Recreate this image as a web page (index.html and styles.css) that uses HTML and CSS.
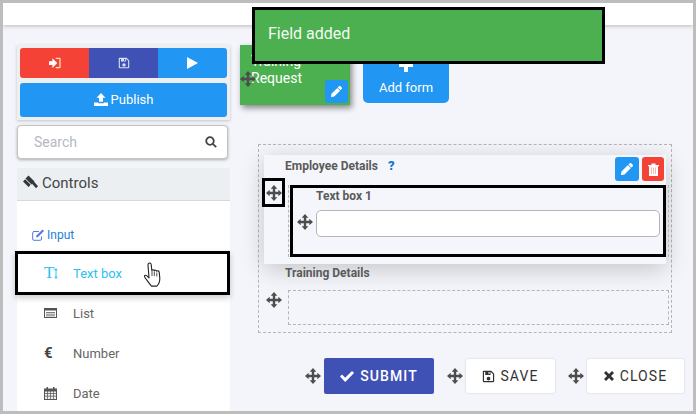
FILE: index.html
```html
<!DOCTYPE html>
<html lang="en">
<head>
    <meta charset="UTF-8">
    <title>Form builder</title>
    <link rel="stylesheet" href="styles.css">
</head>
<body>
    <svg class="defs" width="0" height="0">
        <symbol id="i-move" viewBox="0 0 24 24"><path d="M12 0l5 5.500h-3.200v4.700h4.700V7l5.500 5-5.500 5v-3.200h-4.700v4.700H17l-5 5.500-5-5.500h3.200v-4.700H5.500V17L0 12l5.500-5v3.200h4.700V5.500H7z"/></symbol>
        <symbol id="i-pencil" viewBox="0 0 512 512"><path d="M497.900 142.100l-46.100 46.100c-4.700 4.700-12.300 4.700-17 0l-111-111c-4.700-4.700-4.700-12.300 0-17l46.100-46.100c18.700-18.700 49.100-18.700 67.900 0l60.100 60.100c18.800 18.700 18.800 49.100 0 67.900zM284.200 99.800L21.600 362.400.4 483.900c-2.900 16.400 11.400 30.600 27.800 27.800l121.500-21.300 262.600-262.600c4.700-4.700 4.700-12.300 0-17l-111-111c-4.800-4.700-12.400-4.700-17.100 0z"/></symbol>
        <symbol id="i-save" viewBox="0 0 16 16"><path fill-rule="evenodd" d="M1.500 1H11.500L15 4.500V13.500A1.500 1.500 0 0 1 13.500 15H2.500A1.500 1.500 0 0 1 1 13.500V1.500A.5.5 0 0 1 1.500 1zM2.500 2.500V13.500H13.500V5.100L10.900 2.500H10.500V6H4V2.500zM8 2.500V5H9.300V2.500zM8 8.200A2.300 2.300 0 1 1 8 12.800 2.300 2.300 0 0 1 8 8.200z"/></symbol>
    </svg>

    <div class="frame">
        <div class="topbar"></div>

        <div class="content">
            <aside class="sidebar">
                <div class="actions">
                    <div class="action-row">
                        <button class="btn-red">
                            <svg class="ico" width="12" height="12" viewBox="0 0 16 16" fill="#fff"><path d="M0 5.500h4.500V1.500L11 8l-6.500 6.500v-4H0z"/><path d="M9 1h5a1.500 1.500 0 0 1 1.500 1.500v11A1.500 1.500 0 0 1 14 15H9v-1.600h4.800V2.600H9z" fill="#ffe2b0"/></svg>
                        </button>
                        <button class="btn-indigo">
                            <svg class="ico ico-pale" width="12" height="12"><use href="#i-save"/></svg>
                        </button>
                        <button class="btn-blue">
                            <svg class="ico" width="11" height="12" viewBox="0 0 11 12" fill="#fff"><path d="M0 0l11 6-11 6z"/></svg>
                        </button>
                    </div>
                    <button class="publish">
                        <svg class="ico" width="14" height="13" viewBox="0 0 14 13" fill="#fff"><path d="M7 0l4.500 4.800H9v4H5v-4H2.500z"/><path d="M0 9.500h4.200v.8h5.600v-.8H14V13H0z"/></svg>
                        Publish
                    </button>
                </div>

                <div class="search">
                    <span>Search</span>
                    <svg width="12" height="12" viewBox="0 0 12 12" fill="none" stroke="#444" stroke-width="1.800"><circle cx="5" cy="5" r="3.800"/><path d="M7.800 7.800l3.400 3.400"/></svg>
                </div>

                <div class="controls-head">
                    <svg width="15" height="15" viewBox="0 0 15 15" fill="#33383d"><path d="M5.500 .5l6 6-3 3-6-6z"/><path d="M8 7.500l2-2 5 5.800-2 2z"/><path d="M0 6.500l2.200-2.200 5.500 5.500L5.500 12z"/></svg>
                    Controls
                </div>

                <div class="controls-body">
                    <div class="group-title">
                        <svg width="13" height="12" viewBox="0 0 13 12" fill="none" stroke="#4f7be0" stroke-width="1"><path d="M9.500 7.500V10a1.300 1.300 0 0 1-1.300 1.300H2A1.300 1.300 0 0 1 .7 10V3.800A1.300 1.300 0 0 1 2 2.500h5"/><path d="M4.500 6.500l-.5 2 2-.5 6-6-1.500-1.500z" fill="#4f7be0" stroke="none"/></svg>
                        Input
                    </div>
                    <div class="control control-active">
                        <span class="control-ico text-ico">T<svg width="4" height="11" viewBox="0 0 4 12" fill="#2cc0ee"><path d="M2 0l2 2.500H2.500v7H4L2 12 0 9.500h1.500v-7H0z"/></svg></span>
                        Text box
                    </div>
                    <div class="control">
                        <span class="control-ico">
                            <svg width="13" height="10" viewBox="0 0 13 10"><path d="M0 0h13v10H0z" fill="#555"/><path d="M1 2.500h11V9H1z" fill="#fff"/><path d="M2 4h9v.8H2zM2 5.800h9v.8H2zM2 7.400h9v.8H2z" fill="#555"/></svg>
                        </span>
                        List
                    </div>
                    <div class="control">
                        <span class="control-ico euro">€</span>
                        Number
                    </div>
                    <div class="control">
                        <span class="control-ico">
                            <svg width="13" height="13" viewBox="0 0 13 13"><path d="M0 1.500h2.500V0h1.500v1.500h5V0h1.500v1.500H13V13H0z" fill="#555"/><path d="M1 4.500h2.300v1.800H1zM4 4.500h2.200v1.800H4zM6.900 4.500h2.200v1.800H6.900zM9.800 4.500H12v1.800H9.800zM1 7h2.300v1.800H1zM4 7h2.200v1.800H4zM6.900 7h2.200v1.800H6.900zM9.800 7H12v1.800H9.800zM1 9.500h2.300V12H1zM4 9.500h2.200V12H4zM6.900 9.500h2.200V12H6.900zM9.800 9.500H12V12H9.800z" fill="#eee"/></svg>
                        </span>
                        Date
                    </div>
                </div>
            </aside>

            <main class="main">
                <div class="tiles">
                    <div class="form-tile">
                        <div class="form-name">Training Request</div>
                        <span class="mini-btn tile-edit"><svg width="11" height="11" fill="#fff"><use href="#i-pencil"/></svg></span>
                        <svg class="tile-move" width="16" height="16" fill="#4d4d4d"><use href="#i-move"/></svg>
                    </div>
                    <div class="add-form">
                        <svg width="14" height="14" viewBox="0 0 14 14" fill="#fff"><path d="M5 0h4v5h5v4H9v5H5V9H0V5h5z"/></svg>
                        <span>Add form</span>
                    </div>
                </div>

                <div class="canvas">
                    <section class="section section-open">
                        <div class="section-head">
                            <span class="section-title">Employee Details</span>
                            <span class="help">?</span>
                            <span class="section-tools">
                                <span class="mini-btn"><svg width="12" height="12" fill="#fff"><use href="#i-pencil"/></svg></span>
                                <span class="mini-btn mini-red">
                                    <svg width="11" height="13" viewBox="0 0 11 13"><path d="M0 2h3.500V.5h4V2H11v1.200H10V13H1V3.200H0z" fill="#fff"/><path d="M3 4.500h.8V11H3zM5.100 4.500h.8V11h-.8zM7.200 4.500H8V11h-.8z" fill="#f8a9a3"/></svg>
                                </span>
                            </span>
                        </div>
                        <div class="section-body">
                            <span class="handle-box"><svg width="16" height="16" fill="#4d4d4d"><use href="#i-move"/></svg></span>
                            <div class="field-slot">
                                <div class="field-box">
                                    <svg class="field-move" width="16" height="16" fill="#4d4d4d"><use href="#i-move"/></svg>
                                    <div class="field">
                                        <label>Text box 1</label>
                                        <div class="text-input"></div>
                                    </div>
                                </div>
                            </div>
                        </div>
                    </section>

                    <section class="section-empty">
                        <div class="section-title empty-title">Training Details</div>
                        <div class="empty-row">
                            <svg class="empty-move" width="16" height="16" fill="#4d4d4d"><use href="#i-move"/></svg>
                            <div class="dropzone"></div>
                        </div>
                    </section>
                </div>

                <div class="form-actions">
                    <svg width="16" height="16" fill="#4d4d4d"><use href="#i-move"/></svg>
                    <button class="submit">
                        <svg width="14" height="11" viewBox="0 0 14 11" fill="#fff"><path d="M0 5.500l2-2 3.200 3.200L12 0l2 2-8.800 9z"/></svg>
                        SUBMIT
                    </button>
                    <svg class="gap-move" width="16" height="16" fill="#4d4d4d"><use href="#i-move"/></svg>
                    <button class="plain save">
                        <svg width="13" height="13" fill="#333"><use href="#i-save"/></svg>
                        SAVE
                    </button>
                    <svg class="gap-move" width="16" height="16" fill="#4d4d4d"><use href="#i-move"/></svg>
                    <button class="plain close">
                        <svg width="10" height="10" viewBox="0 0 10 10" fill="#333"><path d="M0 2l2-2 3 3 3-3 2 2-3 3 3 3-2 2-3-3-3 3-2-2 3-3z"/></svg>
                        CLOSE
                    </button>
                </div>
            </main>
        </div>

        <div class="toast">Field added</div>

        <svg class="cursor" width="20" height="26" viewBox="0 0 20 26">
            <path d="M5.500 1.500c1-1 2.500-.5 2.700 1l.6 6c.3-1 2.300-1 2.500.3.400-1 2.200-.8 2.400.5.500-.8 2.300-.6 2.500.8l.6 6c.2 3-1 6-3 8H8.500c-1.500-1.500-3-4-5-6.500-1-1.200-2.500-2.800-2-3.800.6-1 2-.4 3 .5l1.500 1.500L5 3c0-.7 0-1.100.5-1.500z" fill="#fff" stroke="#222" stroke-width="1.100" stroke-linejoin="round"/>
            <path d="M9 9v5M11.300 9.500v4.500M13.800 10.500v4" stroke="#222" stroke-width=".8" fill="none"/>
        </svg>
    </div>
</body>
</html>
```

FILE: styles.css
```css
* {
    box-sizing: border-box;
}

body {
    margin: 0;
    font-family: "Roboto", "Liberation Sans", sans-serif;
    color: #555;
}

button {
    font-family: inherit;
    border: none;
    padding: 0;
}

.defs {
    position: absolute;
}

.frame {
    position: relative;
    width: 696px;
    height: 414px;
    border: 3px solid #bdbdbd;
    background: #f4f5fa;
    overflow: hidden;
}

.topbar {
    height: 22px;
    background: #fff;
    box-shadow: 0 1px 4px rgba(0, 0, 0, 0.25);
}

.content {
    display: flex;
    padding: 20px 0 0 14px;
}

/* sidebar */
.sidebar {
    width: 213px;
    flex: none;
}

.actions {
    padding: 3px;
    background: #eeeff1;
    box-shadow: 0 1px 3px rgba(0, 0, 0, 0.2);
}

.action-row {
    display: flex;
    height: 30px;
    border-radius: 3px;
    overflow: hidden;
}

.action-row button {
    flex: 1;
    display: flex;
    align-items: center;
    justify-content: center;
}

.btn-red {
    background: #f44336;
}

.btn-indigo {
    background: #3f51b5;
}

.btn-blue {
    background: #2196f3;
}

.ico-pale {
    fill: #d9def5;
}

.publish {
    display: flex;
    align-items: center;
    justify-content: center;
    gap: 3px;
    width: 100%;
    height: 34px;
    margin-top: 5px;
    padding-bottom: 1px;
    background: #2196f3;
    color: #fff;
    font-size: 13px;
    border-radius: 3px;
}

.search {
    display: flex;
    align-items: center;
    justify-content: space-between;
    width: 211px;
    height: 34px;
    margin: 5px 0 9px;
    padding: 0 10px 0 16px;
    background: #fff;
    border: 1px solid #c4c4c4;
    border-radius: 4px;
    box-shadow: 0 1px 3px rgba(0, 0, 0, 0.3);
    color: #b4b8c4;
    font-size: 14px;
}

.controls-head {
    display: flex;
    align-items: center;
    gap: 4px;
    height: 33px;
    padding: 0 0 3px 6px;
    background: #eceff1;
    border-bottom: 1px solid #cfdde3;
    color: #444;
    font-size: 15px;
}

.controls-body {
    background: #fff;
    padding-top: 25px;
    height: 220px;
}

.group-title {
    display: flex;
    align-items: center;
    gap: 2px;
    height: 18px;
    padding-left: 15px;
    color: #1e7fd8;
    font-size: 12px;
}

.control {
    display: flex;
    align-items: center;
    height: 40px;
    padding-left: 27px;
    font-size: 13px;
    color: #666;
}

.control-ico {
    display: flex;
    align-items: center;
    width: 29px;
    color: #555;
}

.control-active {
    height: 44px;
    margin: 7px 0 -2px -2px;
    padding-left: 26px;
    border: 3px solid #000;
    color: #2cc0ee;
    box-shadow: 0 3px 6px rgba(0, 0, 0, 0.2);
}

.text-ico {
    font-family: "Liberation Serif", serif;
    font-size: 17px;
    color: #2cc0ee;
}

.euro {
    font-weight: 700;
    font-size: 15px;
    color: #444;
}

/* main area */
.main {
    flex: none;
    width: 450px;
    margin-left: 10px;
}

.tiles {
    display: flex;
    align-items: flex-start;
    gap: 13px;
}

.form-tile {
    position: relative;
    width: 110px;
    height: 60px;
    padding: 8px 8px 0 11px;
    background: #4caf50;
    color: #fff;
    font-size: 14px;
    line-height: 17px;
    box-shadow: 2px 3px 6px rgba(0, 0, 0, 0.45);
}

.form-name {
    width: 70px;
}

.mini-btn {
    display: flex;
    align-items: center;
    justify-content: center;
    width: 24px;
    height: 24px;
    background: #2196f3;
    border-radius: 3px;
}

.mini-red {
    width: 22px;
    background: #f44336;
}

.tile-edit {
    position: absolute;
    right: 2px;
    bottom: 2px;
    width: 23px;
    height: 23px;
}

.tile-move {
    position: absolute;
    left: 0;
    top: 26px;
}

.add-form {
    display: flex;
    flex-direction: column;
    align-items: center;
    justify-content: flex-end;
    gap: 8px;
    width: 86px;
    height: 58px;
    padding-bottom: 8px;
    background: #2196f3;
    color: #fff;
    font-size: 13px;
    border-radius: 5px;
}

.canvas {
    width: 414px;
    height: 189px;
    margin: 39px 0 0 18px;
    padding: 10px 5px 0;
    border: 1px dashed #b5b5b5;
}

.section-open {
    height: 109px;
    background: #f5f6fb;
    box-shadow: 0 5px 22px rgba(0, 0, 0, 0.2);
}

.section-head {
    display: flex;
    align-items: flex-start;
    height: 31px;
    padding: 2px 2px 0 21px;
}

.section-title {
    margin-top: 2px;
    color: #5a5a5a;
    font-size: 12px;
    font-weight: 700;
    line-height: 14px;
}

.help {
    margin: 2px 0 0 10px;
    color: #1976d2;
    font-size: 13px;
    font-weight: 900;
    line-height: 14px;
}

.section-tools {
    display: flex;
    gap: 3px;
    margin-left: auto;
}

.section-body {
    display: flex;
    align-items: flex-start;
}

.handle-box {
    display: flex;
    align-items: center;
    justify-content: center;
    flex: none;
    width: 23px;
    height: 29px;
    margin: -8px 3px 0 -2px;
    border: 3px solid #000;
}

.field-slot {
    flex: none;
    margin-top: -1px;
    padding: 0 2px 0 1px;
    border-left: 1px dashed #b5b5b5;
    border-right: 1px dashed #b5b5b5;
}

.field-box {
    display: flex;
    width: 376px;
    height: 72px;
    padding-left: 4px;
    border: 3px solid #000;
    background: #f5f6fb;
}

.field-move {
    flex: none;
    margin-top: 26px;
}

.field {
    flex: 1;
    padding: 0 3px;
}

.field label {
    display: block;
    height: 22px;
    padding-top: 1px;
    color: #5a5a5a;
    font-size: 12px;
    font-weight: 700;
    line-height: 14px;
}

.text-input {
    height: 27px;
    background: #fff;
    border: 1px solid #b5b5b5;
    border-radius: 5px;
}

.empty-title {
    height: 26px;
    margin-top: 0;
    padding: 2px 0 0 21px;
}

.empty-row {
    display: flex;
    align-items: flex-start;
    gap: 6px;
    padding-left: 2px;
}

.empty-move {
    flex: none;
    margin-top: 2px;
}

.dropzone {
    flex: none;
    width: 381px;
    height: 35px;
    border: 1px dashed #b5b5b5;
}

.form-actions {
    display: flex;
    align-items: center;
    width: 450px;
    height: 36px;
    margin-top: 25px;
    padding-left: 65px;
}

.form-actions button {
    display: flex;
    align-items: center;
    justify-content: center;
    gap: 6px;
    flex: none;
    font-size: 14px;
    letter-spacing: 1.1px;
}

.submit {
    width: 110px;
    height: 36px;
    margin-left: 3px;
    background: #3f51b5;
    color: #fff;
    font-weight: 500;
    border-radius: 2px;
}

.plain {
    height: 34px;
    background: #fff;
    color: #333;
    box-shadow: 0 0 2px rgba(0, 0, 0, 0.2);
    border-radius: 2px;
}

.form-actions .save {
    width: 89px;
    gap: 5px;
}

.close {
    width: 97px;
}

.gap-move {
    flex: none;
    margin: 0 3px 0 13px;
}

/* overlays */
.toast {
    position: absolute;
    left: 249px;
    top: 4px;
    width: 353px;
    height: 57px;
    padding: 0 13px;
    background: #4caf50;
    border: 3px solid #000;
    color: #f2fbf2;
    font-size: 16px;
    line-height: 48px;
}

.cursor {
    position: absolute;
    left: 140px;
    top: 259px;
}
```
